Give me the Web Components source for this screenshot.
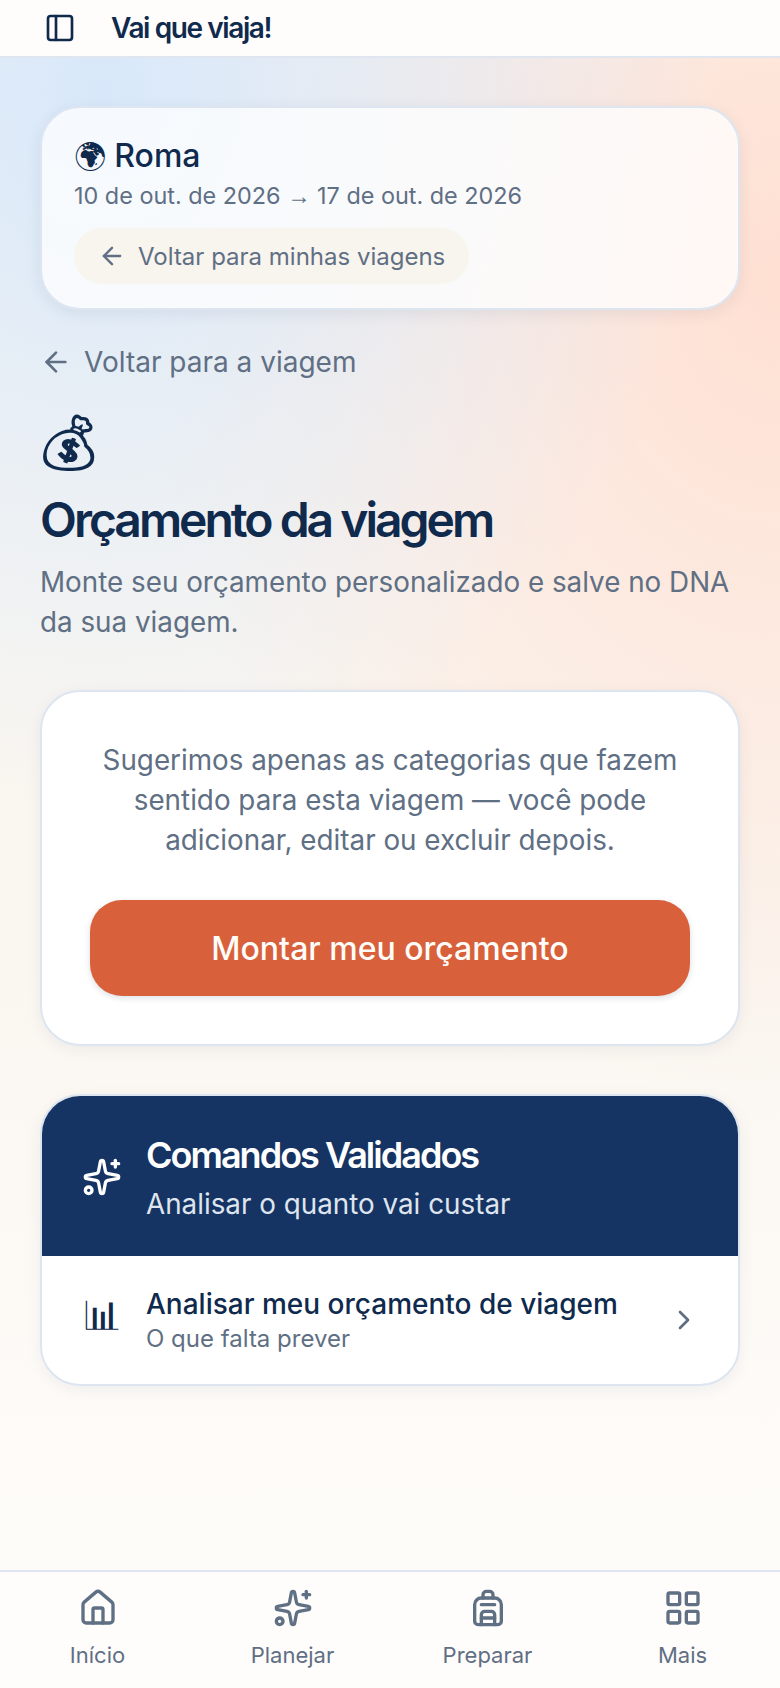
<!DOCTYPE html>
<html lang="pt-BR">
<head>
<meta charset="utf-8">
<title>Vai que viaja!</title>
<style>
  html, body { margin: 0; height: 100%; }
  body {
    font-family: Inter, "Noto Sans", sans-serif;
    color: #0f2a4d;
    background:
      radial-gradient(620px 720px at 100px 90px, #d8e8fa 0%, rgba(216,232,250,0) 100%),
      radial-gradient(640px 820px at 780px 280px, #ffe0d3 0%, rgba(255,224,211,0) 100%),
      linear-gradient(#faf6f0 55%, #fefcf9 90%);
  }
  #app { display: flex; flex-direction: column; height: 1688px; }
</style>
</head>
<body>
<div id="app">
  <app-header></app-header>
  <main-area>
    <trip-card></trip-card>
    <back-link></back-link>
    <page-title></page-title>
    <budget-card></budget-card>
    <commands-card></commands-card>
  </main-area>
  <bottom-nav></bottom-nav>
</div>

<script>
const ARROW_LEFT = `<path d="m12 19-7-7 7-7"/><path d="M19 12H5"/>`;
const SPARKLES = `<path d="M11.017 2.814a1 1 0 0 1 1.966 0l1.051 5.558a2 2 0 0 0 1.594 1.594l5.558 1.051a1 1 0 0 1 0 1.966l-5.558 1.051a2 2 0 0 0-1.594 1.594l-1.051 5.558a1 1 0 0 1-1.966 0l-1.051-5.558a2 2 0 0 0-1.594-1.594l-5.558-1.051a1 1 0 0 1 0-1.966l5.558-1.051a2 2 0 0 0 1.594-1.594z"/><path d="M20 2v4"/><path d="M22 4h-4"/><circle cx="4" cy="20" r="2"/>`;
const svg = (size, inner) => `<svg width="${size}" height="${size}" viewBox="0 0 24 24" fill="none" stroke="currentColor" stroke-width="2" stroke-linecap="round" stroke-linejoin="round">${inner}</svg>`;

class AppHeader extends HTMLElement {
  constructor() {
    super();
    this.attachShadow({ mode: "open" });
    this.shadowRoot.innerHTML = `
      <style>
        :host { display: flex; align-items: center; gap: 35px; height: 56px; padding: 0 0 0 44px; background: #fffdfb; border-bottom: 2px solid #dfe6f0; flex: none; }
        svg { display: block; }
        b { font-size: 28px; font-weight: 600; letter-spacing: -0.05em; color: #0f2a4d; }
      </style>
      ${svg(32, `<rect width="18" height="18" x="3" y="3" rx="2"/><path d="M9 3v18"/>`)}
      <b>Vai que viaja!</b>`;
  }
}

class MainArea extends HTMLElement {
  constructor() {
    super();
    this.attachShadow({ mode: "open" });
    this.shadowRoot.innerHTML = `
      <style>:host { display: flex; flex-direction: column; flex: 1; padding: 48px 40px 0; min-height: 0; }</style>
      <slot></slot>`;
  }
}

class TripCard extends HTMLElement {
  constructor() {
    super();
    this.attachShadow({ mode: "open" });
    this.shadowRoot.innerHTML = `
      <style>
        :host { display: block; box-sizing: border-box; height: 204px; padding: 26px 32px; border: 2px solid #dde5f0; border-radius: 40px; background: rgba(255,255,255,.75); box-shadow: 0 4px 16px rgba(15,42,77,.08); }
        .name { display: flex; align-items: center; gap: 8px; height: 44px; font-size: 32px; line-height: 44px; font-weight: 500; color: #0f2a4d; }
        .emoji { margin-top: 10px; font-family: "Noto Sans Symbols 2", sans-serif; font-variant-emoji: text; font-size: 32px; font-weight: 400; }
        .dates { height: 36px; font-size: 23.4px; line-height: 36px; color: #5f6f84; }
        .arrow { font-family: "Noto Sans Symbols 2", sans-serif; line-height: 1; }
        .pill { display: inline-flex; align-items: center; gap: 12px; height: 56px; margin-top: 14px; padding: 0 24px; border-radius: 28px; background: #f8f4ee; font-size: 24px; color: #5f6f84; }
        svg { display: block; }
      </style>
      <div class="name"><span class="emoji">🌍&#xFE0E;</span><span>Roma</span></div>
      <div class="dates">10 de out. de 2026 <span class="arrow">→</span> 17 de out. de 2026</div>
      <div class="pill">${svg(28, ARROW_LEFT)}<span>Voltar para minhas viagens</span></div>`;
  }
}

class BackLink extends HTMLElement {
  constructor() {
    super();
    this.attachShadow({ mode: "open" });
    this.shadowRoot.innerHTML = `
      <style>
        :host { display: flex; align-items: center; gap: 12px; height: 44px; margin-top: 30px; font-size: 28px; color: #5f6f84; }
        svg { display: block; }
      </style>
      ${svg(32, ARROW_LEFT)}<span>Voltar para a viagem</span>`;
  }
}

class PageTitle extends HTMLElement {
  constructor() {
    super();
    this.attachShadow({ mode: "open" });
    this.shadowRoot.innerHTML = `
      <style>
        :host { display: block; margin-top: 36px; }
        .emoji { height: 64px; font-family: "Noto Sans Symbols 2", sans-serif; font-variant-emoji: text; font-size: 60px; line-height: 64px; color: #0f2a4d; }
        h1 { margin: 6px 0 0; font-size: 48px; line-height: 60px; font-weight: 600; letter-spacing: -0.0625em; color: #0f2a4d; }
        p { margin: 12px 0 0; font-size: 27.8px; line-height: 40px; color: #5f6f84; }
      </style>
      <div class="emoji">💰&#xFE0E;</div>
      <h1>Orçamento da viagem</h1>
      <p>Monte seu orçamento personalizado e salve no DNA da sua viagem.</p>`;
  }
}

class BudgetCard extends HTMLElement {
  constructor() {
    super();
    this.attachShadow({ mode: "open" });
    this.shadowRoot.innerHTML = `
      <style>
        :host { display: block; box-sizing: border-box; margin-top: 48px; padding: 48px 48px; border: 2px solid #dde5f0; border-radius: 40px; background: #fff; box-shadow: 0 4px 16px rgba(15,42,77,.06); }
        p { margin: 0; text-align: center; font-size: 27.8px; line-height: 40px; color: #5f6f84; }
        button { display: block; width: 100%; height: 96px; margin-top: 40px; border: 0; border-radius: 32px; background: #d8603b; color: #fffdfa; font: 500 32px Inter, sans-serif; box-shadow: 0 2px 6px rgba(15,42,77,.15); }
      </style>
      <p>Sugerimos apenas as categorias que fazem sentido para esta viagem — você pode adicionar, editar ou excluir depois.</p>
      <button>Montar meu orçamento</button>`;
  }
}

class CommandsCard extends HTMLElement {
  constructor() {
    super();
    this.attachShadow({ mode: "open" });
    this.shadowRoot.innerHTML = `
      <style>
        :host { display: block; box-sizing: border-box; margin-top: 48px; border: 2px solid #dde5f0; border-radius: 40px; overflow: hidden; background: #fff; box-shadow: 0 4px 16px rgba(15,42,77,.06); }
        .head { display: flex; align-items: center; gap: 24px; height: 160px; box-sizing: border-box; padding: 2px 40px 0; background: #153463; color: #fff; }
        .head h2 { margin: 0; font-size: 36px; line-height: 50px; font-weight: 600; letter-spacing: -0.055em; }
        .head p { margin: 4px 0 0; font-size: 27.8px; line-height: 40px; color: #dfe5ee; }
        .row { display: flex; align-items: center; height: 128px; padding: 0 38px 0 40px; box-sizing: border-box; gap: 24px; }
        .chart { width: 40px; font-family: "Noto Sans Symbols 2", sans-serif; font-variant-emoji: text; font-size: 40px; text-align: center; color: #0f2a4d; }
        .txt { flex: 1; }
        .t { font-size: 28px; line-height: 38px; font-weight: 500; color: #0f2a4d; }
        .s { font-size: 24px; line-height: 32px; color: #5f6f84; }
        svg { display: block; flex: none; }
        .chev { color: #5f6f84; }
      </style>
      <div class="head">
        ${svg(40, SPARKLES)}
        <div><h2>Comandos Validados</h2><p>Analisar o quanto vai custar</p></div>
      </div>
      <div class="row">
        <span class="chart">📊&#xFE0E;</span>
        <div class="txt"><div class="t">Analisar meu orçamento de viagem</div><div class="s">O que falta prever</div></div>
        <span class="chev">${svg(32, `<path d="m9 18 6-6-6-6"/>`)}</span>
      </div>`;
  }
}

class NavItem extends HTMLElement {
  constructor() {
    super();
    this.attachShadow({ mode: "open" });
    this.shadowRoot.innerHTML = `
      <style>
        :host { display: flex; flex: 1; flex-direction: column; align-items: center; gap: 11px; color: #5f6f84; font-size: 22px; line-height: 32px; }
      </style>
      <slot name="icon"></slot><slot></slot>`;
  }
}
customElements.define("nav-item", NavItem);

class BottomNav extends HTMLElement {
  constructor() {
    super();
    this.attachShadow({ mode: "open" });
    const item = (label, inner) => `<nav-item><span slot="icon" style="display:block;height:40px">${svg(40, inner)}</span>${label}</nav-item>`;
    this.shadowRoot.innerHTML = `
      <style>:host { display: flex; flex: none; box-sizing: border-box; height: 118px; padding-top: 16px; background: #fffdfb; border-top: 2px solid #dfe6f0; }</style>
      ${item("Início", `<path d="M15 21v-8a1 1 0 0 0-1-1h-4a1 1 0 0 0-1 1v8"/><path d="M3 10a2 2 0 0 1 .709-1.528l7-5.999a2 2 0 0 1 2.582 0l7 5.999A2 2 0 0 1 21 10v9a2 2 0 0 1-2 2H5a2 2 0 0 1-2-2z"/>`)}
      ${item("Planejar", SPARKLES)}
      ${item("Preparar", `<path d="M4 10a4 4 0 0 1 4-4h8a4 4 0 0 1 4 4v10a2 2 0 0 1-2 2H6a2 2 0 0 1-2-2z"/><path d="M8 10h8"/><path d="M8 18h8"/><path d="M8 22v-6a2 2 0 0 1 2-2h4a2 2 0 0 1 2 2v6"/><path d="M9 6V4a2 2 0 0 1 2-2h2a2 2 0 0 1 2 2v2"/>`)}
      ${item("Mais", `<rect width="7" height="7" x="3" y="3" rx="1"/><rect width="7" height="7" x="14" y="3" rx="1"/><rect width="7" height="7" x="14" y="14" rx="1"/><rect width="7" height="7" x="3" y="14" rx="1"/>`)}`;
  }
}

customElements.define("app-header", AppHeader);
customElements.define("main-area", MainArea);
customElements.define("trip-card", TripCard);
customElements.define("back-link", BackLink);
customElements.define("page-title", PageTitle);
customElements.define("budget-card", BudgetCard);
customElements.define("commands-card", CommandsCard);
customElements.define("bottom-nav", BottomNav);
</script>
</body>
</html>
